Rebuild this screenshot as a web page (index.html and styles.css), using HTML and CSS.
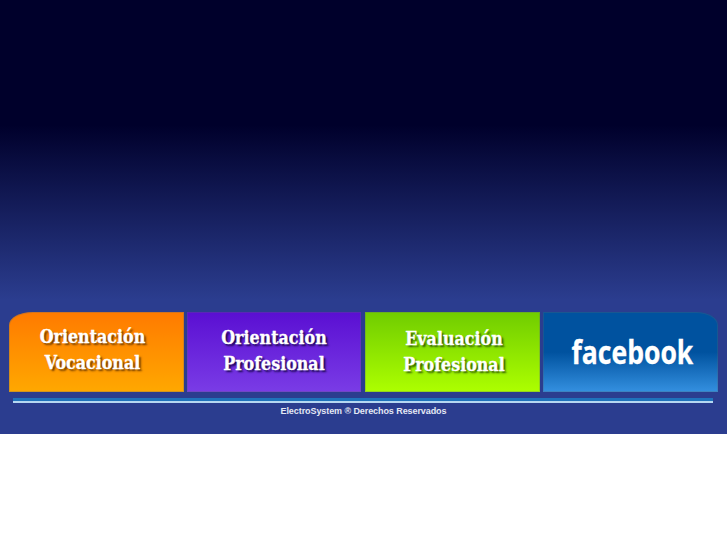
FILE: index.html
```html
<!DOCTYPE html>
<html lang="es">
<head>
<meta charset="utf-8">
<title>ElectroSystem</title>
<link rel="stylesheet" href="styles.css">
</head>
<body>
<main class="stage">
  <nav class="tiles">
    <a class="tile tile-orange" href="#"><span>Orientación<br>Vocacional</span></a>
    <a class="tile tile-purple" href="#"><span>Orientación<br>Profesional</span></a>
    <a class="tile tile-green" href="#"><span>Evaluación<br>Profesional</span></a>
    <a class="tile tile-blue" href="#"><span class="fb">facebook</span></a>
  </nav>
  <div class="rule"></div>
  <footer class="legal">ElectroSystem ® Derechos Reservados</footer>
</main>
</body>
</html>
```
FILE: styles.css
```css
* { box-sizing: border-box; }
html, body { margin: 0; padding: 0; background: #fff; }
body { height: 545px; overflow: hidden; }
.stage {
  height: 434px;
  padding: 312px 9px 0 9px;
  background: linear-gradient(to bottom, #00002b 0, #00002b 125px, #2b3d8f 300px, #2b3d8f 100%);
}
.tiles { display: flex; height: 80px; }
.tile {
  display: flex;
  align-items: center;
  justify-content: center;
  text-align: center;
  text-decoration: none;
  color: #fff;
  font-family: "DejaVu Serif Condensed", "DejaVu Serif", serif;
  font-weight: 700;
  font-size: 17.7px;
  line-height: 26px;
  -webkit-text-stroke: 0.3px #fff;
  box-shadow: inset 0 0 0 1px rgba(90, 100, 110, 0.28);
}
.tile-orange {
  width: 175px;
  margin-right: 3px;
  padding: 0 8px 4px 0;
  border-top-left-radius: 24px 13px;
  background: linear-gradient(to bottom, #ff7a00, #ffa800);
  text-shadow: 2px 2px 2px #6e3a00;
}
.tile-purple {
  width: 174px;
  margin-right: 4px;
  padding-bottom: 2px;
  background: linear-gradient(to bottom, #5a0fd2, #7a3ce6);
  text-shadow: 2px 2px 2px #1a0650;
}
.tile-green {
  width: 175px;
  margin-right: 3px;
  padding: 0 0 0 3px;
  background: linear-gradient(to bottom, #70cc00, #adff00);
  text-shadow: 2px 2px 2px #2e5c00;
}
.tile-blue {
  width: 175px;
  padding: 0 0 0 4px;
  border-top-right-radius: 22px 13px;
  background: linear-gradient(to bottom, #00529f 0, #00529f 50%, #3490e0 100%);
}
.fb {
  display: block;
  font-family: "Open Sans", sans-serif;
  font-weight: 700;
  font-size: 32px;
  line-height: 40px;
  -webkit-text-stroke: 0.3px #fff;
  transform: scaleX(0.83);
}
.rule {
  width: 700px;
  height: 5px;
  margin: 6px 0 0 4px;
  background: linear-gradient(to bottom, #1f72bb 0, #1f72bb 60%, #b5d8f2 60%, #b5d8f2 100%);
}
.legal {
  margin-top: 2px;
  text-align: center;
  color: #e4e8f4;
  font-family: "Liberation Sans", Arial, sans-serif;
  font-weight: 700;
  font-size: 9px;
  line-height: 12px;
  letter-spacing: -0.08px;
}
```
